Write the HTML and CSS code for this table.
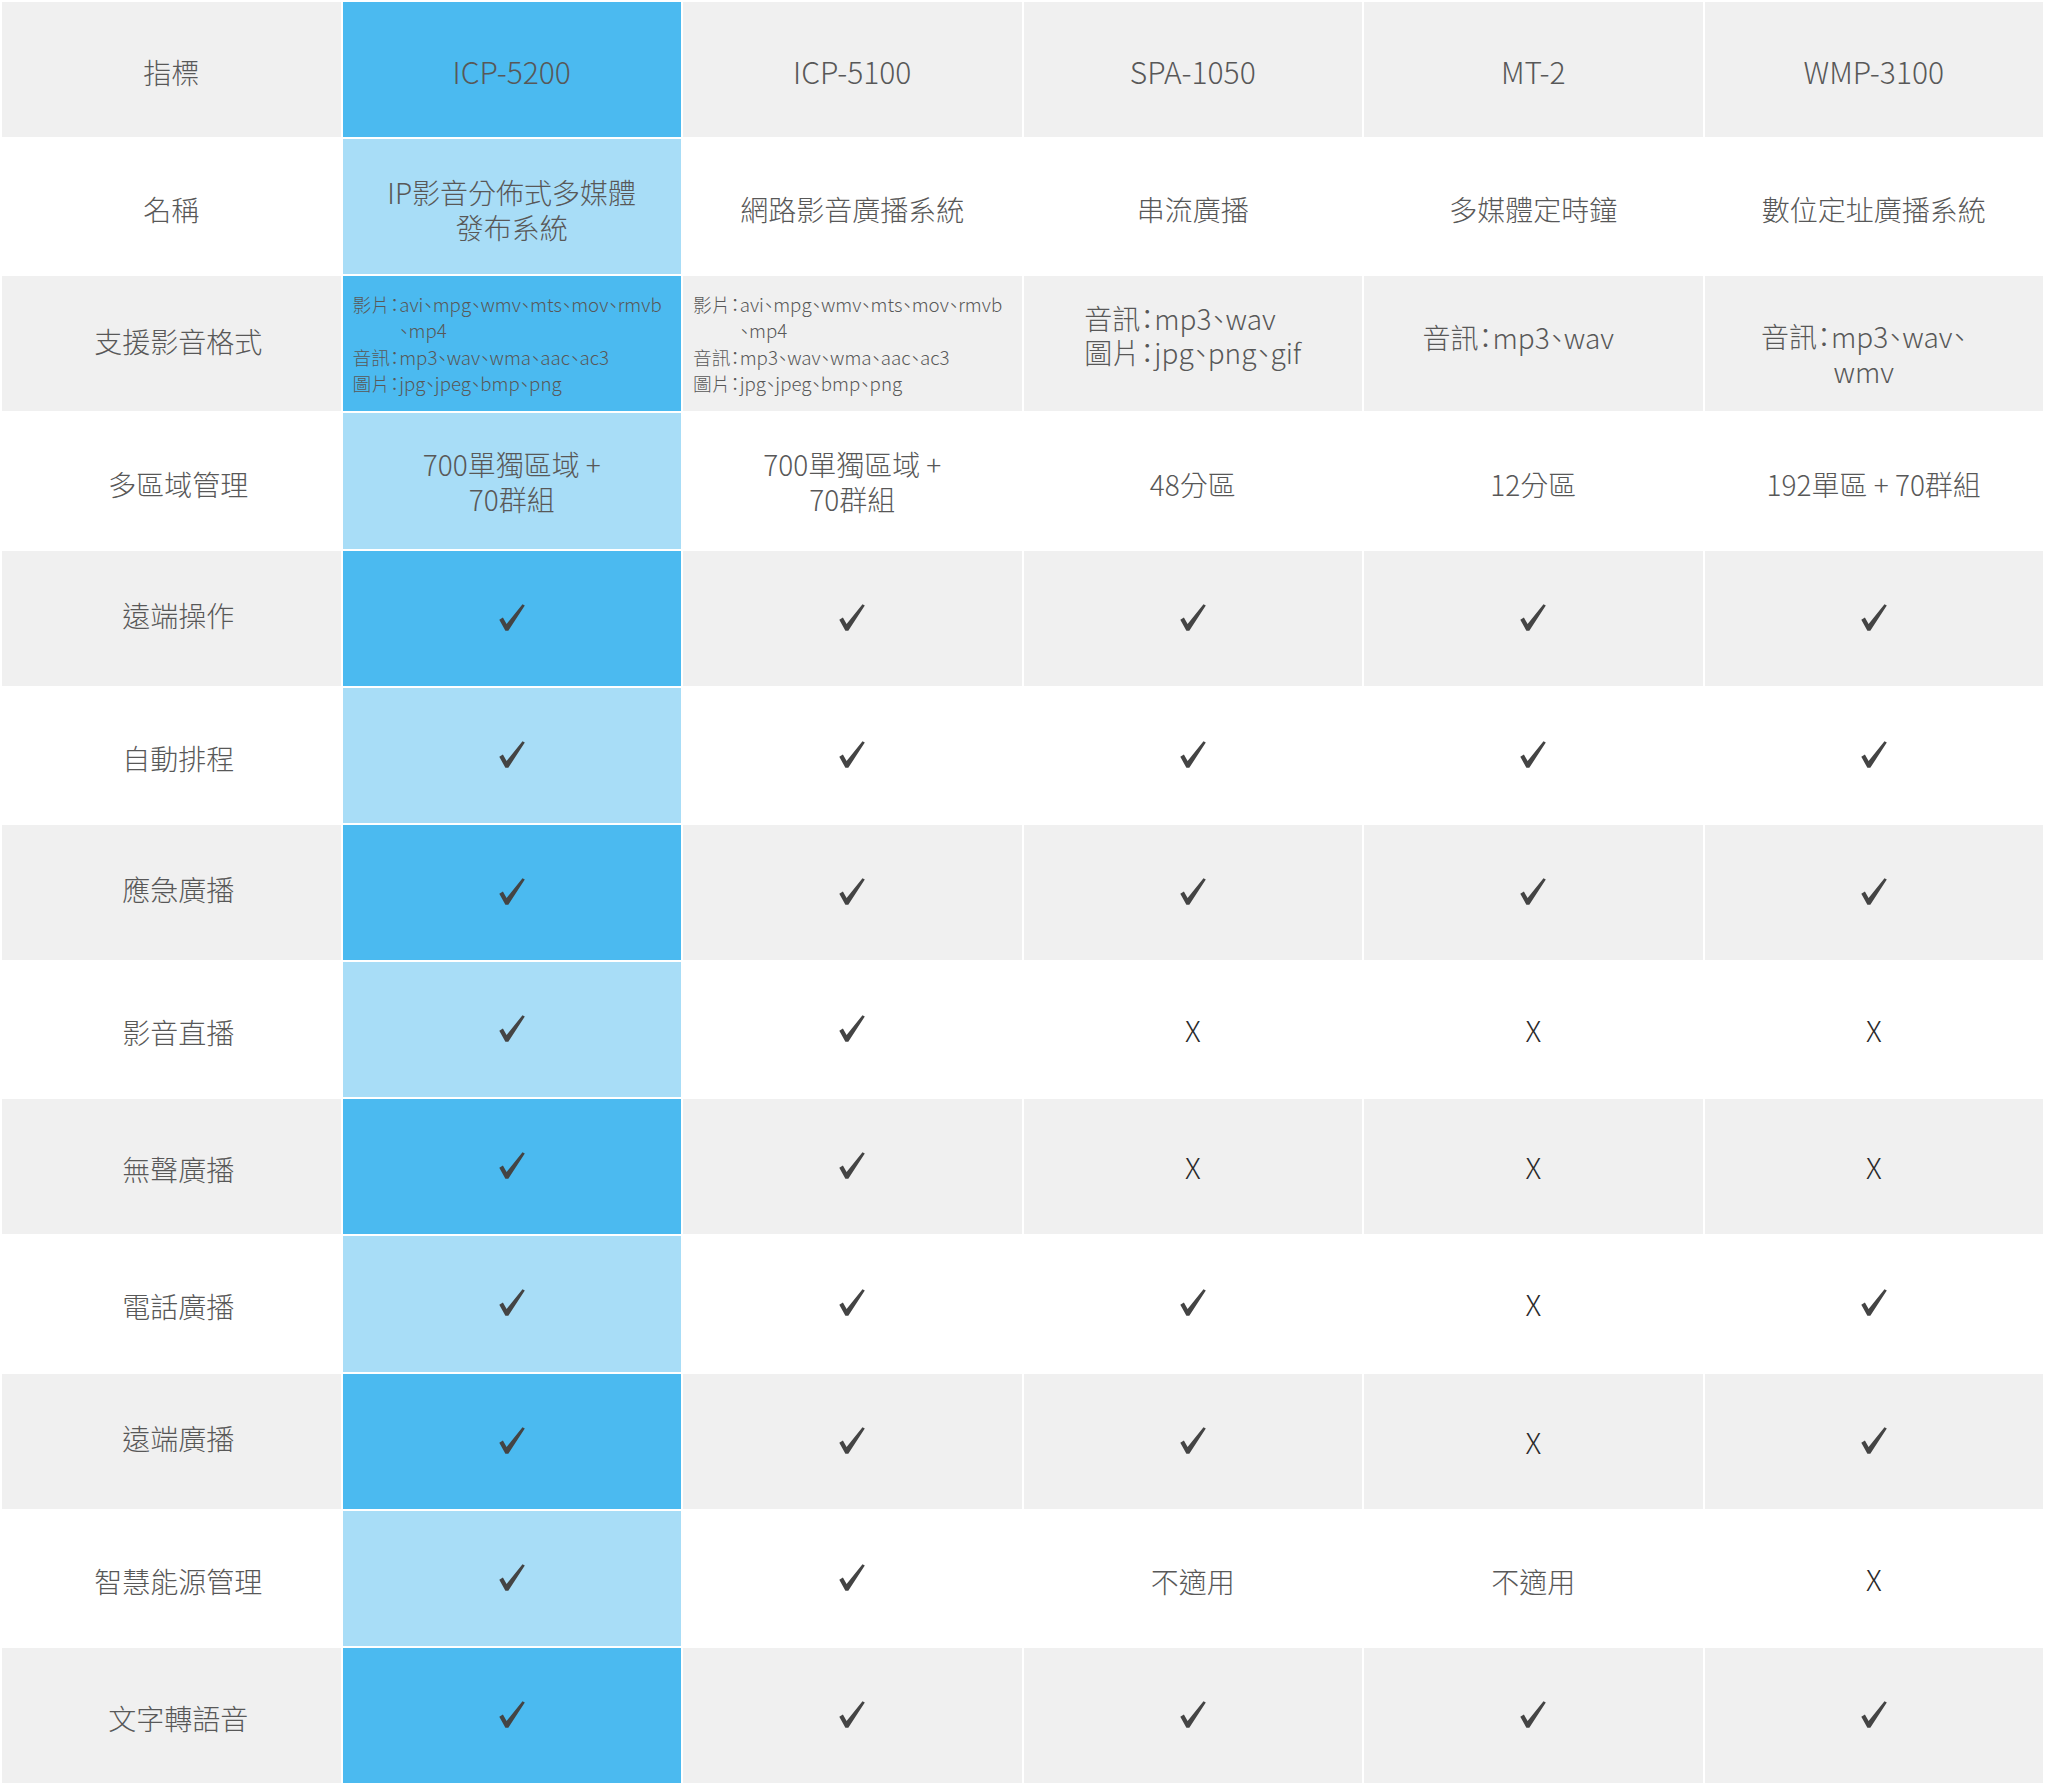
FILE: index.html
```html
<!DOCTYPE html>
<html lang="zh-Hant">
<head>
<meta charset="utf-8">
<title>產品比較表</title>
<link rel="stylesheet" href="styles.css">
</head>
<body>
<svg class="defs" width="0" height="0" aria-hidden="true">
  <symbol id="chk" viewBox="0 0 26 27">
    <path d="M0.3 15.8 L3.9 13.5 L7.6 19.9 L23.5 0.2 L25.8 1.5 L9.3 26.8 L6.4 26.8 Z"/>
  </symbol>
</svg>
<div class="table">
  <!-- row 1 -->
  <div class="c lab top">指標</div>
  <div class="c hl head">ICP-5200</div>
  <div class="c head">ICP-5100</div>
  <div class="c head">SPA-1050</div>
  <div class="c head">MT-2</div>
  <div class="c head">WMP-3100</div>
  <!-- row 2 -->
  <div class="c lab top">名稱</div>
  <div class="c hl">IP影音分佈式多媒體<br>發布系統</div>
  <div class="c">網路影音廣播系統</div>
  <div class="c">串流廣播</div>
  <div class="c">多媒體定時鐘</div>
  <div class="c">數位定址廣播系統</div>
  <!-- row 3 -->
  <div class="c lab up">支援影音格式</div>
  <div class="c hl left">
    <div class="fmt">
      <div class="ln">影片：avi、mpg、wmv、mts、mov、rmvb</div>
      <div class="ln ind">、mp4</div>
      <div class="ln">音訊：mp3、wav、wma、aac、ac3</div>
      <div class="ln">圖片：jpg、jpeg、bmp、png</div>
    </div>
  </div>
  <div class="c left">
    <div class="fmt">
      <div class="ln">影片：avi、mpg、wmv、mts、mov、rmvb</div>
      <div class="ln ind">、mp4</div>
      <div class="ln">音訊：mp3、wav、wma、aac、ac3</div>
      <div class="ln">圖片：jpg、jpeg、bmp、png</div>
    </div>
  </div>
  <div class="c fmt-spa"><div class="blk">音訊：mp3、wav<br>圖片：jpg、png、gif</div></div>
  <div class="c fmt-mt">音訊：mp3、wav</div>
  <div class="c fmt-wmp">音訊：mp3、wav、<br>wmv</div>
  <!-- row 4 -->
  <div class="c lab">多區域管理</div>
  <div class="c hl two">700單獨區域 +<br>70群組</div>
  <div class="c two">700單獨區域 +<br>70群組</div>
  <div class="c">48分區</div>
  <div class="c">12分區</div>
  <div class="c">192單區 + 70群組</div>
  <!-- row 5 -->
  <div class="c lab up">遠端操作</div>
  <div class="c hl"><svg class="ck"><use href="#chk"/></svg></div>
  <div class="c"><svg class="ck"><use href="#chk"/></svg></div>
  <div class="c"><svg class="ck"><use href="#chk"/></svg></div>
  <div class="c"><svg class="ck"><use href="#chk"/></svg></div>
  <div class="c"><svg class="ck"><use href="#chk"/></svg></div>
  <!-- row 6 -->
  <div class="c lab">自動排程</div>
  <div class="c hl"><svg class="ck"><use href="#chk"/></svg></div>
  <div class="c"><svg class="ck"><use href="#chk"/></svg></div>
  <div class="c"><svg class="ck"><use href="#chk"/></svg></div>
  <div class="c"><svg class="ck"><use href="#chk"/></svg></div>
  <div class="c"><svg class="ck"><use href="#chk"/></svg></div>
  <!-- row 7 -->
  <div class="c lab up">應急廣播</div>
  <div class="c hl"><svg class="ck"><use href="#chk"/></svg></div>
  <div class="c"><svg class="ck"><use href="#chk"/></svg></div>
  <div class="c"><svg class="ck"><use href="#chk"/></svg></div>
  <div class="c"><svg class="ck"><use href="#chk"/></svg></div>
  <div class="c"><svg class="ck"><use href="#chk"/></svg></div>
  <!-- row 8 -->
  <div class="c lab">影音直播</div>
  <div class="c hl"><svg class="ck"><use href="#chk"/></svg></div>
  <div class="c"><svg class="ck"><use href="#chk"/></svg></div>
  <div class="c x">X</div>
  <div class="c x">X</div>
  <div class="c x">X</div>
  <!-- row 9 -->
  <div class="c lab">無聲廣播</div>
  <div class="c hl"><svg class="ck"><use href="#chk"/></svg></div>
  <div class="c"><svg class="ck"><use href="#chk"/></svg></div>
  <div class="c x">X</div>
  <div class="c x">X</div>
  <div class="c x">X</div>
  <!-- row 10 -->
  <div class="c lab">電話廣播</div>
  <div class="c hl"><svg class="ck"><use href="#chk"/></svg></div>
  <div class="c"><svg class="ck"><use href="#chk"/></svg></div>
  <div class="c"><svg class="ck"><use href="#chk"/></svg></div>
  <div class="c x">X</div>
  <div class="c"><svg class="ck"><use href="#chk"/></svg></div>
  <!-- row 11 -->
  <div class="c lab up">遠端廣播</div>
  <div class="c hl"><svg class="ck"><use href="#chk"/></svg></div>
  <div class="c"><svg class="ck"><use href="#chk"/></svg></div>
  <div class="c"><svg class="ck"><use href="#chk"/></svg></div>
  <div class="c x">X</div>
  <div class="c"><svg class="ck"><use href="#chk"/></svg></div>
  <!-- row 12 -->
  <div class="c lab">智慧能源管理</div>
  <div class="c hl"><svg class="ck"><use href="#chk"/></svg></div>
  <div class="c"><svg class="ck"><use href="#chk"/></svg></div>
  <div class="c">不適用</div>
  <div class="c">不適用</div>
  <div class="c x">X</div>
  <!-- row 13 -->
  <div class="c lab">文字轉語音</div>
  <div class="c hl"><svg class="ck"><use href="#chk"/></svg></div>
  <div class="c"><svg class="ck"><use href="#chk"/></svg></div>
  <div class="c"><svg class="ck"><use href="#chk"/></svg></div>
  <div class="c"><svg class="ck"><use href="#chk"/></svg></div>
  <div class="c"><svg class="ck"><use href="#chk"/></svg></div>
</div>
</body>
</html>
```
FILE: styles.css
```css
html, body {
  margin: 0;
  padding: 0;
  background: #ffffff;
}

body {
  font-family: "Noto Sans CJK TC", "Noto Sans", sans-serif;
  font-weight: 300;
  font-feature-settings: "palt";
  color: #585858;
  width: 2048px;
  height: 1787px;
  overflow: hidden;
}

.defs {
  position: absolute;
  width: 0;
  height: 0;
}

.table {
  display: grid;
  grid-template-columns: repeat(6, 1fr);
  grid-template-rows: repeat(13, 1fr);
  gap: 2px;
  width: 2041px;
  height: 1781px;
  margin: 2px 0 0 2px;
}

.c {
  display: flex;
  align-items: center;
  justify-content: center;
  text-align: center;
  font-size: 28px;
  line-height: 35px;
  padding-top: 6px;
  box-sizing: border-box;
  overflow: hidden;
}

/* alternating rows: odd rows grey */
.c:nth-child(12n+1),
.c:nth-child(12n+2),
.c:nth-child(12n+3),
.c:nth-child(12n+4),
.c:nth-child(12n+5),
.c:nth-child(12n+6) {
  background: #f0f0f0;
}

.c.hl {
  background: #a8ddf7;
}

.c.hl:nth-child(12n+2) {
  background: #4bbaf0;
}

.c.head {
  font-size: 30px;
  padding-top: 4px;
}

.c.lab {
  padding-left: 14px;
}

.c.lab.top {
  padding-left: 0;
}

.c.lab.up {
  padding-top: 0;
  padding-bottom: 5px;
}

.c.two {
  padding-top: 1px;
}

.c.left {
  justify-content: flex-start;
  text-align: left;
  padding: 0 0 0 10px;
}

.fmt {
  font-size: 18.7px;
  line-height: 26.5px;
}

.ln {
  white-space: nowrap;
}

.ln.ind {
  padding-left: 2.5em;
}

.blk {
  text-align: left;
  line-height: 34px;
}

.c.fmt-spa {
  padding: 0 0 18px 0;
}

.c.fmt-mt {
  padding: 0 30px 13px 0;
}

.c.fmt-wmp {
  padding: 21px 20px 0 0;
}

.ck {
  width: 26px;
  height: 27px;
  fill: #444444;
  margin-top: -8px;
}

.c.x {
  color: #2a2a2a;
  font-size: 29px;
  padding-top: 0;
}
```
